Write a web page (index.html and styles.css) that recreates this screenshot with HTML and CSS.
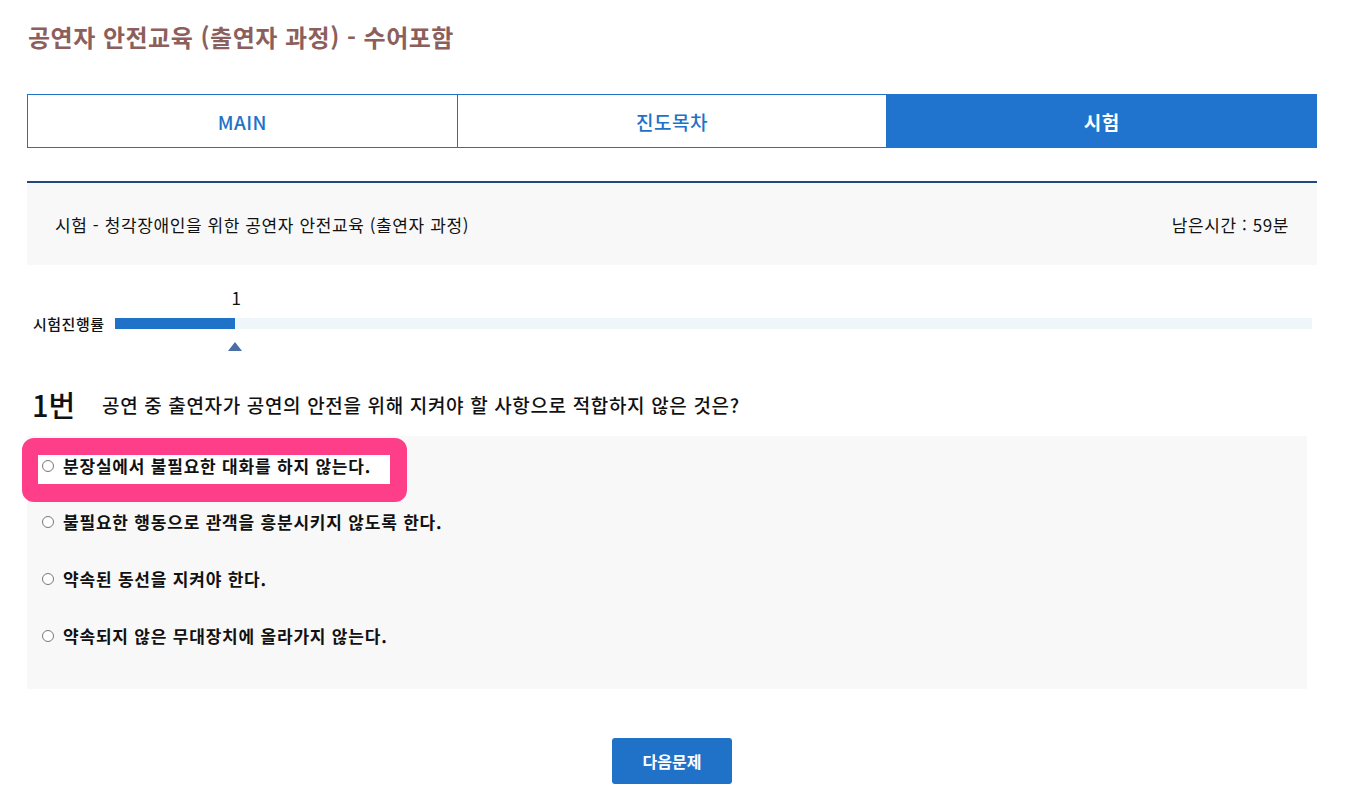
FILE: index.html
```html
<!DOCTYPE html>
<html lang="ko">
<head>
  <meta charset="UTF-8" />
  <title>시험</title>
  <meta name="viewport" content="width=device-width, initial-scale=1.0" />
  <link rel="stylesheet" href="styles.css">
</head>
<body>

<div class="wrap">
  <h1 class="course-title">공연자 안전교육 (출연자 과정) - 수어포함</h1>

  <!-- tabs -->
  <div class="tabs">
    <a class="tab">MAIN</a>
    <a class="tab">진도목차</a>
    <a class="tab on">시험</a>
  </div>

  <!-- exam header -->
  <div class="exam-head">
    <span>시험 - 청각장애인을 위한 공연자 안전교육 (출연자 과정)</span>
    <span>남은시간 : 59분</span>
  </div>

  <!-- progress -->
  <div class="progress">
    <span class="progress-label">시험진행률</span>
    <div class="bar">
      <div class="fill" style="width: 120px;">
        <span class="num">1</span>
        <span class="arrow"></span>
      </div>
    </div>
  </div>

  <!-- question -->
  <div class="question">
    <span class="q-no">1번</span>
    <span class="q-text">공연 중 출연자가 공연의 안전을 위해 지켜야 할 사항으로 적합하지 않은 것은?</span>
  </div>

  <ul class="answers">
    <li><label class="mark"><span class="radio"></span>분장실에서 불필요한 대화를 하지 않는다.</label></li>
    <li><label><span class="radio"></span>불필요한 행동으로 관객을 흥분시키지 않도록 한다.</label></li>
    <li><label><span class="radio"></span>약속된 동선을 지켜야 한다.</label></li>
    <li><label><span class="radio"></span>약속되지 않은 무대장치에 올라가지 않는다.</label></li>
  </ul>

  <div class="btns">
    <button class="next">다음문제</button>
  </div>
</div>

</body>
</html>
```

FILE: styles.css
```css
* { box-sizing: border-box; }
body {
  margin: 0;
  background: #fff;
  color: #111;
  font-family: "Noto Sans CJK KR", "Noto Sans", sans-serif;
}
.wrap {
  width: 1290px;
  margin-left: 27px;
  padding-top: 20px;
}

.course-title {
  margin: 0 0 40px 1px;
  font-size: 24px;
  line-height: 34px;
  letter-spacing: 0.5px;
  font-weight: bold;
  color: #8c5f5c;
}

.tabs {
  display: flex;
  height: 54px;
}
.tab {
  flex: 1;
  display: flex;
  align-items: center;
  justify-content: center;
  border: 1px solid #2072c9;
  color: #2072c9;
  font-size: 19px;
  letter-spacing: 0.5px;
  font-weight: 500;
}
.tab + .tab { border-left: none; }
.tab.on {
  background: #2074ce;
  border-color: #2074ce;
  color: #fff;
  font-weight: bold;
}

.exam-head {
  margin-top: 33px;
  border-top: 2px solid #1f4a80;
  background: #f8f8f8;
  height: 84px;
  padding: 0 28px;
  display: flex;
  justify-content: space-between;
  align-items: center;
  font-size: 17px;
  letter-spacing: 0.6px;
  color: #111;
}

.progress {
  display: flex;
  align-items: center;
  margin-top: 53px;
  height: 11px;
  padding-right: 5px;
}
.progress-label {
  width: 88px;
  padding-left: 6px;
  font-size: 15px;
  letter-spacing: 0.5px;
  font-weight: 500;
}
.bar {
  flex: 1;
  height: 11px;
  background: #eef6fa;
}
.fill {
  position: relative;
  height: 11px;
  background: #2072c9;
}
.num {
  position: absolute;
  right: -6px;
  top: -30px;
  font-size: 17px;
  line-height: 20px;
}
.arrow {
  position: absolute;
  right: -7px;
  top: 24px;
  border-left: 7px solid transparent;
  border-right: 7px solid transparent;
  border-bottom: 9px solid #4a6fa5;
}

.question {
  display: flex;
  align-items: center;
  margin-top: 55px;
  padding-left: 5px;
  height: 40px;
}
.q-no {
  font-size: 29px;
  font-weight: 500;
  width: 70px;
}
.q-text {
  font-size: 19px;
  letter-spacing: 0.65px;
  font-weight: 500;
}

.answers {
  list-style: none;
  margin: 12px 10px 0 0;
  padding: 0 0 25px 15px;
  background: #f8f8f8;
}
.answers li {
  height: 57px;
  display: flex;
  align-items: center;
}
.answers label {
  display: flex;
  align-items: center;
  font-size: 17px;
  letter-spacing: 0.8px;
  font-weight: bold;
  line-height: 24px;
}
.radio {
  width: 12px;
  height: 12px;
  border: 1px solid #777;
  border-radius: 50%;
  background: #fff;
  margin-right: 9px;
}
.answers .mark {
  margin: 10px 0 0 -20px;
  width: 385px;
  height: 64px;
  padding: 0 0 6px 4px;
  border: solid #ff3e8a;
  border-width: 17px 17px 18px 16px;
  border-radius: 12px;
  background: #fff;
}

.btns {
  text-align: center;
  margin-top: 49px;
}
.next {
  width: 120px;
  height: 46px;
  border: none;
  border-radius: 3px;
  background: #2072c9;
  color: #fff;
  font-family: "Noto Sans CJK KR", sans-serif;
  font-size: 16px;
  font-weight: bold;
}
```
